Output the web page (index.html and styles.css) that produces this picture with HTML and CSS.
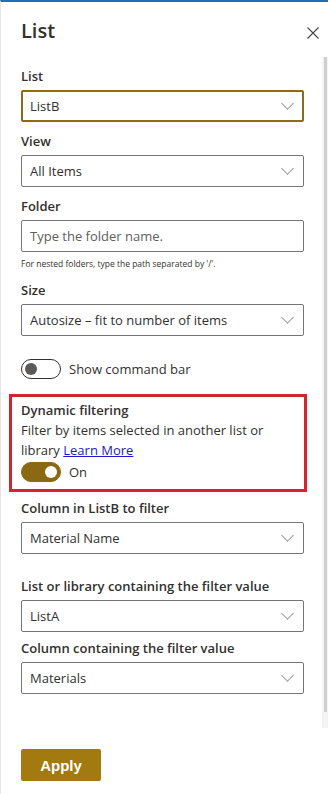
FILE: index.html
```html
<!DOCTYPE html>
<html lang="en">
<head>
  <meta charset="UTF-8" />
  <title>List</title>
  <link rel="stylesheet" href="styles.css">
</head>
<body>
  <div class="panel">
    <header class="panel-head">
      <h1>List</h1>
      <svg class="close" width="12" height="12" viewBox="0 0 12 12">
        <path d="M0.5 0.5 L11.5 11.5 M11.5 0.5 L0.5 11.5" stroke="#484644" stroke-width="1.1" fill="none" />
      </svg>
    </header>

    <div class="scroll-area">
      <div class="fields">
        <div class="field">
          <label>List</label>
          <div class="dropdown active"><span>ListB</span><i class="chevron"></i></div>
        </div>

        <div class="field">
          <label>View</label>
          <div class="dropdown"><span>All Items</span><i class="chevron"></i></div>
        </div>

        <div class="field">
          <label>Folder</label>
          <div class="textbox"><span class="placeholder">Type the folder name.</span></div>
          <p class="hint">For nested folders, type the path separated by '/'.</p>
        </div>

        <div class="field">
          <label>Size</label>
          <div class="dropdown"><span>Autosize – fit to number of items</span><i class="chevron"></i></div>
        </div>

        <div class="toggle-row cmd">
          <span class="toggle"><span class="knob"></span></span>
          <span>Show command bar</span>
        </div>

        <!-- highlighted section -->
        <div class="highlight">
          <label>Dynamic filtering</label>
          <p class="desc">Filter by items selected in another list or library <a href="#">Learn More</a></p>
          <div class="toggle-row">
            <span class="toggle on"><span class="knob"></span></span>
            <span>On</span>
          </div>
        </div>

        <div class="field first-after">
          <label>Column in ListB to filter</label>
          <div class="dropdown"><span>Material Name</span><i class="chevron"></i></div>
        </div>

        <div class="field spaced">
          <label>List or library containing the filter value</label>
          <div class="dropdown"><span>ListA</span><i class="chevron"></i></div>
        </div>

        <div class="field">
          <label>Column containing the filter value</label>
          <div class="dropdown"><span>Materials</span><i class="chevron"></i></div>
        </div>
      </div>
      <div class="scrollbar"><div class="thumb"></div></div>
    </div>

    <footer class="panel-foot">
      <button class="apply">Apply</button>
    </footer>
  </div>
</body>
</html>
```

FILE: styles.css
```css
* {
  box-sizing: border-box;
}

body {
  margin: 0;
  background-color: white;
  font-family: 'Open Sans', 'Noto Sans', sans-serif;
  color: #323130;
  font-size: 13px;
}

.panel {
  height: 794px;
  border-top: 2px solid #1d70b8;
  border-left: 1px solid #e6e6e6;
  display: flex;
  flex-direction: column;
}

.panel-head {
  height: 55px;
  display: flex;
  justify-content: space-between;
  align-items: flex-start;
  padding: 15px 9px 0 20px;
}

.panel-head h1 {
  margin: 0;
  font-size: 20px;
  line-height: 28px;
  font-weight: 600;
}

.close {
  margin-top: 10px;
}

.scroll-area {
  height: 671px;
  display: flex;
}

.fields {
  flex: 1;
  padding: 9px 0 0 20px;
}

.scrollbar {
  width: 6px;
  height: 100%;
  background-color: #f4f4f4;
  padding: 0 1px 16px 2px;
}

.thumb {
  height: 100%;
  background-color: #cfcfcf;
}

.field {
  margin-bottom: 9px;
  width: 283px;
}

label {
  display: block;
  font-weight: 600;
  line-height: 20px;
  margin-bottom: 4px;
}

.dropdown, .textbox {
  height: 32px;
  border: 1px solid #757575;
  border-radius: 2px;
  display: flex;
  align-items: center;
  justify-content: space-between;
  padding: 0 8px 0 8px;
}

.dropdown.active {
  border: 2px solid #8d6b12;
  padding-left: 7px;
  padding-right: 7px;
}

.chevron {
  width: 9px;
  height: 9px;
  border-right: 1px solid #9a9896;
  border-bottom: 1px solid #9a9896;
  transform: rotate(45deg);
  margin: 0 3px 5px 0;
}

.placeholder {
  color: #605e5c;
}

.hint {
  margin: 5px 0 0;
  font-size: 8.5px;
  line-height: 14px;
}

.toggle-row {
  display: flex;
  align-items: center;
  gap: 8px;
  height: 20px;
}

.toggle-row.cmd {
  margin: 23px 0 15px;
}

.toggle {
  width: 40px;
  height: 20px;
  border: 1px solid #323130;
  border-radius: 10px;
  display: flex;
  align-items: center;
  padding: 0 3px;
}

.knob {
  width: 12px;
  height: 12px;
  border-radius: 50%;
  background-color: #5b5a58;
}

.toggle.on {
  background-color: #8b6912;
  border-color: #8b6912;
  justify-content: flex-end;
}

.toggle.on .knob {
  background-color: white;
}

.highlight {
  width: 298px;
  margin-left: -12px;
  border: 3px solid #d7232f;
  padding: 3px 9px 7px 9px;
}

.highlight label {
  margin-bottom: 0;
}

.desc {
  margin: 0 0 2px;
  line-height: 20px;
}

.desc a {
  color: #1a1ad0;
}

.first-after {
  margin-top: 6px;
  margin-bottom: 22px;
}

.spaced {
  margin-bottom: 6px;
}

.panel-foot {
  flex: 1;
  padding: 21px 0 0 20px;
}

.apply {
  width: 80px;
  height: 32px;
  border: none;
  border-radius: 2px;
  background-color: #a27a10;
  color: white;
  font-family: 'Liberation Sans', Arial, sans-serif;
  font-weight: 700;
  font-size: 15px;
}
```
